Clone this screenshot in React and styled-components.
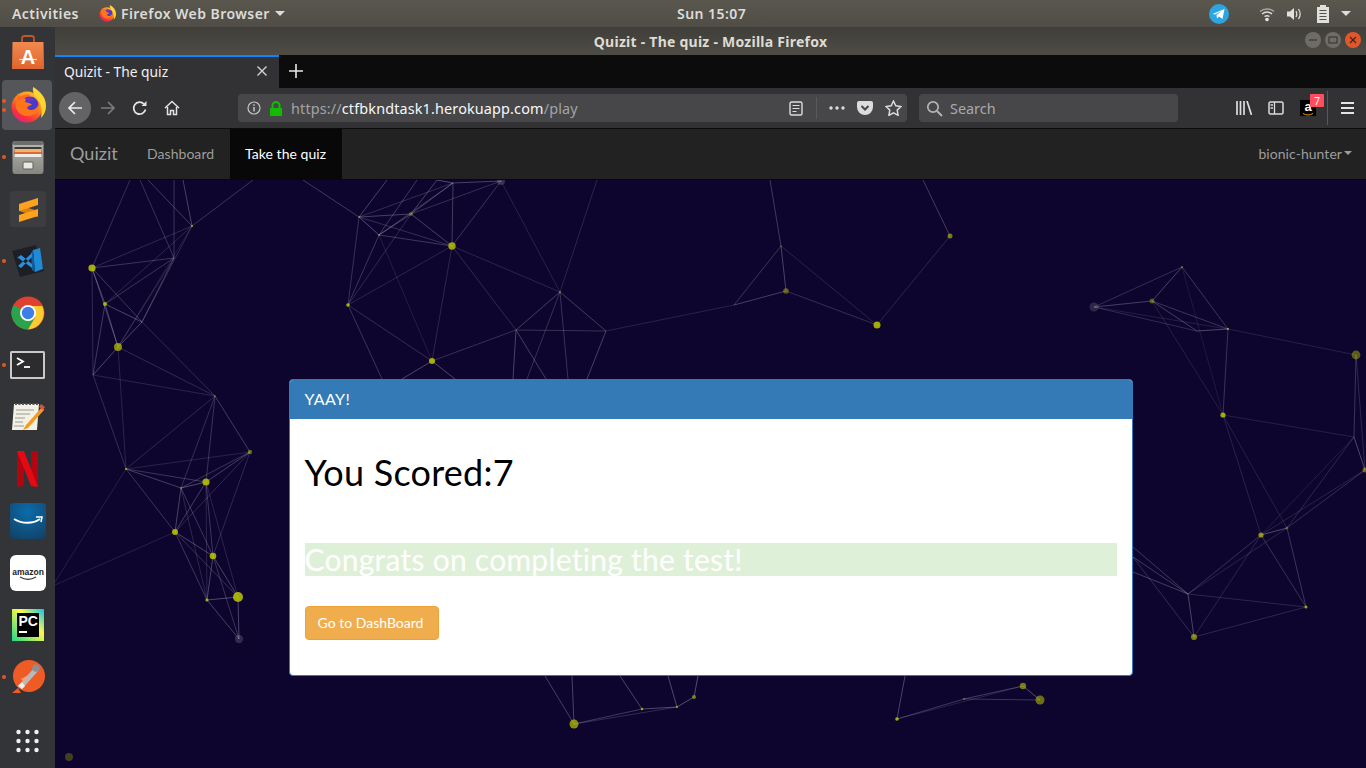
import React from 'react';
import styled, { createGlobalStyle } from 'styled-components';

const UI_FONT = '"Noto Sans", "Open Sans", sans-serif';
const PAGE_FONT = 'Lato, "Noto Sans", sans-serif';

const GlobalStyle = createGlobalStyle`
  html, body {
    margin: 0;
    padding: 0;
    height: 100%;
    overflow: hidden;
    background: #0d052e;
  }
  * { box-sizing: border-box; }
`;

const Screen = styled.div`
  width: 1366px;
  height: 768px;
  display: flex;
  flex-direction: column;
  overflow: hidden;
  font-family: ${UI_FONT};
`;

/* gnome top bar */
const TopBar = styled.div`
  height: 27px;
  flex: none;
  display: grid;
  grid-template-columns: 677px auto 1fr;
  align-items: center;
  background: linear-gradient(#5a574f, #504d46);
  color: #dcdcd8;
  font-size: 14px;
  font-weight: 600;
  letter-spacing: 0.45px;
`;

const TopLeft = styled.div`
  display: flex;
  align-items: center;
  padding-left: 12px;
`;

const AppMenu = styled.div`
  display: flex;
  align-items: center;
  gap: 5px;
  margin-left: 20px;
`;

const Clock = styled.div`
  text-align: center;
`;

const Tray = styled.div`
  display: flex;
  align-items: center;
  justify-content: flex-end;
  padding-right: 15px;
`;

const TrayItem = styled.div`
  display: flex;
  margin-left: ${p => p.$gap}px;
`;

const Caret = styled.span`
  display: inline-block;
  width: 0;
  height: 0;
  border-left: ${p => p.$size}px solid transparent;
  border-right: ${p => p.$size}px solid transparent;
  border-top: ${p => p.$size}px solid ${p => p.$color};
  margin-left: ${p => p.$gap || 0}px;
`;

const Desktop = styled.div`
  flex: 1;
  min-height: 0;
  display: flex;
`;

/* ubuntu dock */
const Dock = styled.div`
  width: 55px;
  flex: none;
  display: flex;
  flex-direction: column;
  background: #333438;
`;

const DockItem = styled.div`
  position: relative;
  height: 52px;
  flex: none;
  display: flex;
  align-items: center;
  justify-content: center;
  margin-top: ${p => p.$top || 0}px;
  &::before {
    content: '';
    display: ${p => (p.$active ? 'block' : 'none')};
    position: absolute;
    left: 2px;
    top: 1px;
    width: 50px;
    height: 50px;
    border-radius: 4px;
    background: #55565a;
  }
`;

const DockIcon = styled.div`
  position: relative;
  display: flex;
`;

const RunDots = styled.div`
  position: absolute;
  left: 2px;
  top: 0;
  bottom: 0;
  display: flex;
  flex-direction: column;
  justify-content: center;
  gap: 5px;
`;

const RunDot = styled.span`
  width: 4px;
  height: 4px;
  border-radius: 50%;
  background: #e95420;
`;

const Browser = styled.div`
  flex: 1;
  min-width: 0;
  display: flex;
  flex-direction: column;
`;

const TitleBar = styled.div`
  position: relative;
  height: 28px;
  flex: none;
  display: flex;
  align-items: center;
  justify-content: center;
  background: linear-gradient(#403e38, #4e4c45);
  color: #dedbd2;
  font-size: 14px;
  font-weight: 700;
  letter-spacing: 0.25px;
`;

const WindowButtons = styled.div`
  position: absolute;
  right: 5px;
  top: 5px;
  display: flex;
  gap: 4px;
`;

const WindowButton = styled.div`
  width: 16px;
  height: 16px;
  border-radius: 50%;
  display: flex;
  align-items: center;
  justify-content: center;
  background: ${p => p.$bg};
`;

const TabStrip = styled.div`
  height: 33px;
  flex: none;
  display: flex;
  background: #0c0c0c;
`;

const Tab = styled.div`
  width: 224px;
  display: flex;
  align-items: center;
  justify-content: space-between;
  padding: 0 11px 3px 9px;
  background: #323234;
  border-top: 2px solid #0a84ff;
  color: #f0f0f2;
  font-size: 13.8px;
`;

const NewTab = styled.div`
  width: 34px;
  padding-bottom: 2px;
  display: flex;
  align-items: center;
  justify-content: center;
`;

const Toolbar = styled.div`
  height: 41px;
  flex: none;
  display: flex;
  align-items: center;
  padding: 0 3px 0 4px;
  background: #323234;
  border-bottom: 1px solid #0c0c0c;
`;

const ToolButton = styled.div`
  position: relative;
  width: 32px;
  height: 32px;
  flex: none;
  display: flex;
  align-items: center;
  justify-content: center;
  border-radius: 50%;
  background: ${p => (p.$round ? '#636365' : 'transparent')};
  margin-left: ${p => p.$left || 0}px;
`;

const InputBox = styled.div`
  height: 28px;
  flex: none;
  width: ${p => p.$width}px;
  margin-left: ${p => p.$left}px;
  display: flex;
  align-items: center;
  border-radius: 4px;
  background: #474749;
  font-size: 14.4px;
`;

const Address = styled.div`
  flex: 1;
  margin-left: 8px;
  white-space: nowrap;
  color: #f7f7f8;
  letter-spacing: 0.15px;
`;

const Dim = styled.span`
  color: #a3a3a6;
`;

const UrlAction = styled.div`
  width: ${p => p.$width || 28}px;
  flex: none;
  display: flex;
  justify-content: center;
`;

const Separator = styled.div`
  width: 1px;
  height: ${p => p.$height}px;
  margin: 0 ${p => p.$space}px;
  background: #59595b;
`;

const SearchText = styled.span`
  color: #a9a9ac;
`;

const AmazonTile = styled.div`
  width: 16px;
  height: 16px;
  display: flex;
  flex-direction: column;
  align-items: center;
  background: #000;
  color: #fff;
  font-family: "Liberation Sans", sans-serif;
  font-weight: 700;
  font-size: 13px;
  line-height: 13px;
`;

const Badge = styled.div`
  position: absolute;
  left: 18px;
  top: 2px;
  width: 14px;
  height: 13px;
  border-radius: 1px;
  display: flex;
  align-items: center;
  justify-content: center;
  background: #ff4f5e;
  color: #fff;
  font-size: 10px;
  line-height: 1;
`;

/* site */
const Navbar = styled.nav`
  height: 51px;
  flex: none;
  display: flex;
  background: #222;
  border-bottom: 1px solid #080808;
  font-family: ${PAGE_FONT};
  font-size: 14px;
  letter-spacing: 0.05px;
  color: #9d9d9d;
`;

const Brand = styled.div`
  width: 77px;
  padding: 0 0 2px 15px;
  display: flex;
  align-items: center;
  font-size: 18px;
`;

const NavLink = styled.div`
  display: flex;
  align-items: center;
  padding: 0 15px 2px;
  background: ${p => (p.$active ? '#080808' : 'transparent')};
  color: ${p => (p.$active ? '#fff' : '#9d9d9d')};
  width: ${p => p.$width}px;
`;

const UserMenu = styled.div`
  margin-left: auto;
  display: flex;
  align-items: center;
  padding: 0 14px 2px 0;
`;

const Page = styled.main`
  position: relative;
  flex: 1;
  min-height: 0;
  display: flex;
  align-items: flex-start;
  justify-content: center;
  padding-top: 199px;
  background: #0d052e;
  overflow: hidden;
`;

const Particles = styled.svg`
  position: absolute;
  left: 0;
  top: 0;
`;

const Panel = styled.section`
  position: relative;
  width: 844px;
  height: 297px;
  background: #fff;
  border: 1px solid #337ab7;
  border-radius: 4px;
  font-family: ${PAGE_FONT};
  font-variant-ligatures: none;
  overflow: hidden;
`;

const PanelHeading = styled.div`
  height: 39px;
  padding: 0 15px 3px;
  display: flex;
  align-items: center;
  background: #337ab7;
  color: #fff;
  font-size: 16px;
  letter-spacing: 0.4px;
`;

const PanelBody = styled.div`
  padding: 33px 15px 0;
`;

const Score = styled.h1`
  margin: 0 0 51px;
  font-size: 36px;
  font-weight: 400;
  line-height: 40px;
  letter-spacing: 0.25px;
  color: #000;
`;

const Congrats = styled.h2`
  margin: 0 0 30px;
  height: 33px;
  font-size: 30px;
  font-weight: 400;
  line-height: 32px;
  letter-spacing: 0.25px;
  color: #fff;
  background: #dff0d8;
`;

const DashButton = styled.button`
  width: 134px;
  height: 34px;
  padding: 0 2px 2px 0;
  display: block;
  border: 1px solid #eea236;
  border-radius: 4px;
  background: #f0ad4e;
  color: #fff;
  font-family: ${PAGE_FONT};
  font-size: 14px;
  font-variant-ligatures: none;
`;

/* icons */
const FirefoxLogo = ({ size, id }) => (
  <svg width={size} height={size} viewBox="0 0 36 36">
    <defs>
      <linearGradient id={id} x1="0.75" y1="0.1" x2="0.25" y2="0.95">
        <stop offset="0" stopColor="#ffb52e" />
        <stop offset="0.4" stopColor="#ff7a1f" />
        <stop offset="0.8" stopColor="#f5303f" />
        <stop offset="1" stopColor="#e8207c" />
      </linearGradient>
    </defs>
    <circle cx="17" cy="20" r="15.500" fill={`url(#${id})`} />
    <path d="M7 6c1 2 2 3 3 4 3-2 7-3 10-2l-3 5-9 3z" fill="#ff6a1f" />
    <path d="M23 0c7 4 13 10 13 19 0 5-2 9-5 12 1-6 1-13-3-18-2-3-6-7-5-13z" fill="#ffd52e" />
    <circle cx="20" cy="18" r="8.500" fill="#4a3ac9" />
    <path d="M16 10c3 0 6 1 8 3l-6 2z" fill="#7b2ec0" />
    <path d="M6 15c3-3 7-4 10-3l-1 3c3 1 6 1 7 3-2 0-4 1-5 3 1 2 5 3 8 1 3-2 4-5 4-7 2 7-4 14-12 14C10 29 4 22 6 15z" fill="#ff7519" />
  </svg>
);

const SoftwareIcon = () => (
  <svg width="34" height="36" viewBox="0 0 34 36">
    <defs>
      <linearGradient id="bag" x1="0" y1="0" x2="0" y2="1">
        <stop offset="0" stopColor="#f08a4e" />
        <stop offset="1" stopColor="#e0642e" />
      </linearGradient>
    </defs>
    <path d="M11 9V3.500C11 2 12 1 13.500 1h7C22 1 23 2 23 3.500V9" fill="none" stroke="#c4552a" strokeWidth="1.800" />
    <path d="M1.500 7h31l.5 27H1z" fill="url(#bag)" />
    <text x="17" y="29" fontFamily="Liberation Sans" fontWeight="700" fontSize="20" fill="#fff" textAnchor="middle">A</text>
    <path d="M8 24.500h18" stroke="#fff" strokeWidth="1.200" opacity="0.8" />
  </svg>
);

const FilesIcon = () => (
  <svg width="32" height="34" viewBox="0 0 32 34">
    <defs>
      <linearGradient id="cab" x1="0" y1="0" x2="0" y2="1">
        <stop offset="0" stopColor="#b9b9b4" />
        <stop offset="1" stopColor="#86867f" />
      </linearGradient>
    </defs>
    <path d="M0.500 4a3 3 0 0 1 3-3h25a3 3 0 0 1 3 3v27a3 3 0 0 1-3 3h-25a3 3 0 0 1-3-3z" fill="url(#cab)" />
    <rect x="0.500" y="1" width="31" height="4" rx="2" fill="#6e6e69" />
    <rect x="2.500" y="7" width="27" height="10" fill="#3f3d3a" />
    <rect x="2.500" y="9" width="27" height="3" fill="#f4b07a" />
    <rect x="2.500" y="12" width="27" height="2" fill="#dd6b2b" />
    <rect x="2.500" y="14" width="27" height="3" fill="#ecece8" />
    <rect x="11" y="22" width="10" height="7" rx="1" fill="#e8e8e4" stroke="#5e5e5a" />
  </svg>
);

const SublimeIcon = () => (
  <svg width="36" height="36" viewBox="0 0 36 36">
    <rect width="36" height="36" rx="3" fill="#3d3d3f" />
    <path d="M9 14l19 6v6L9 20z" fill="#d9800f" />
    <path d="M9 13l19-6v7L9 20z" fill="#ffa21f" />
    <path d="M9 24l19-6v7L9 31z" fill="#ffa21f" />
  </svg>
);

const VscodeIcon = () => (
  <svg width="32" height="32" viewBox="0 0 32 32">
    <path d="M0 6l24-6 8 26-24 6z" fill="#1c2026" />
    <path d="M21 5l7-2 3 21-8 3z" fill="#1f8ad6" />
    <path d="M21 5l2 22-3-2-1-17z" fill="#0f5f9e" />
    <path d="M6 12l3-2 11 9v4L5 12zM6 21l3 2 11-11V8z" fill="#2a8fdc" />
  </svg>
);

const ChromeIcon = () => (
  <svg width="34" height="34" viewBox="0 0 34 34">
    <circle cx="17" cy="17" r="16.500" fill="#e0402f" />
    <path d="M17 17L2.700 8.700A16.500 16.500 0 0 0 17 33.500l7-12z" fill="#2ba24c" />
    <path d="M17 10h14.300a16.500 16.500 0 0 1-14.300 23.500l7-12z" fill="#fbcb30" />
    <circle cx="17" cy="17" r="8" fill="#fff" />
    <circle cx="17" cy="17" r="6.200" fill="#3f7de8" />
  </svg>
);

const TerminalIcon = () => (
  <svg width="35" height="28" viewBox="0 0 35 28">
    <rect width="35" height="28" rx="1.500" fill="#c9c9c9" />
    <rect x="2" y="2" width="31" height="24" fill="#2c2c2e" />
    <path d="M7 7l6 3.500-6 3.500" fill="none" stroke="#fff" strokeWidth="1.800" />
    <path d="M14 16h6" stroke="#fff" strokeWidth="1.800" />
  </svg>
);

const NotesIcon = () => (
  <svg width="34" height="30" viewBox="0 0 34 30">
    <path d="M3 2h25l-2 26H1z" fill="#f3f1e6" />
    <path d="M4 2h24" stroke="#555" strokeWidth="2" strokeDasharray="2 1.500" />
    <path d="M5 8h18M5 12h14M4 16h10M4 20h8M3 24h10" stroke="#9a9a94" />
    <path d="M32 4l-17 19-3 5 5-2L33 8z" fill="#f59a23" />
    <path d="M30 2l4 3-2 3-4-3z" fill="#e0503a" />
  </svg>
);

const NetflixIcon = () => (
  <svg width="21" height="36" viewBox="0 0 21 36">
    <path d="M0 0h7v35l-7 1z" fill="#b1060f" />
    <path d="M14 0h7v36l-7-1z" fill="#b1060f" />
    <path d="M0 0h7l14 36-7-1z" fill="#e50914" />
  </svg>
);

const AmazonBlueIcon = () => (
  <svg width="36" height="36" viewBox="0 0 36 36">
    <defs>
      <radialGradient id="azblue" cx="0.5" cy="0.25" r="0.9">
        <stop offset="0" stopColor="#0b6cab" />
        <stop offset="1" stopColor="#123f63" />
      </radialGradient>
    </defs>
    <rect width="36" height="36" rx="4" fill="url(#azblue)" />
    <path d="M4 16c8 5 19 5 26 0" fill="none" stroke="#fff" strokeWidth="1.800" />
    <path d="M26 14l6 0-1 5" fill="none" stroke="#fff" strokeWidth="1.500" />
  </svg>
);

const AmazonWhiteIcon = () => (
  <svg width="36" height="36" viewBox="0 0 36 36">
    <rect width="36" height="36" rx="6" fill="#fff" />
    <text x="18" y="20" fontFamily="Liberation Sans" fontWeight="700" fontSize="8.500" fill="#222" textAnchor="middle">amazon</text>
    <path d="M10 22c5 3 11 3 16 0" fill="none" stroke="#333" strokeWidth="1.100" />
  </svg>
);

const PycharmIcon = () => (
  <svg width="32" height="32" viewBox="0 0 32 32">
    <defs>
      <linearGradient id="pcbg" x1="0" y1="1" x2="1" y2="0">
        <stop offset="0" stopColor="#21d789" />
        <stop offset="0.6" stopColor="#fcf84a" />
        <stop offset="1" stopColor="#07c3f2" />
      </linearGradient>
    </defs>
    <rect width="32" height="32" fill="url(#pcbg)" />
    <rect x="5" y="4" width="22" height="24" fill="#000" />
    <text x="6.500" y="17" fontFamily="Liberation Sans" fontWeight="700" fontSize="14" fill="#fff">PC</text>
    <rect x="7" y="22" width="8" height="2" fill="#fff" />
  </svg>
);

const PostmanIcon = () => (
  <svg width="34" height="34" viewBox="0 0 34 34">
    <circle cx="18" cy="16" r="16" fill="#ef5b25" />
    <path d="M24 7L7 26l4 3 17-19z" fill="#b9b9b9" />
    <path d="M7 26l4 3 3-3-3-4z" fill="#efefef" />
    <circle cx="25" cy="8" r="3.800" fill="#8e8e8e" />
    <path d="M10 19l9-5-6 8z" fill="#f7a27e" />
    <path d="M1 33l6-5 3 5z" fill="#ef5b25" />
  </svg>
);

const GridIcon = () => (
  <svg width="24" height="24" viewBox="0 0 24 24" fill="#f2f2f2">
    {[3, 12, 21].map(y => [2.500, 11.500, 20.500].map(x => <circle key={`${x}-${y}`} cx={x} cy={y} r="2.200" />))}
  </svg>
);

const stroke = (color, width = 1.6) => ({ fill: 'none', stroke: color, strokeWidth: width });

/* background network, coordinates are screen pixels */
const NODES = {
  A: [192, 226, 1], B: [92, 268, 3.6], C: [174, 258, 0], D: [105, 304, 2], E: [142, 322, 0], F: [118, 347, 4, 0.7],
  G: [93, 375, 0], H: [215, 396, 1, 0.3], I: [250, 452, 2.2, 0.5], J: [126, 469, 1], K: [206, 482, 3.6], L: [181, 488, 1, 0.4],
  M: [175, 532, 3], N: [213, 556, 3.3], O: [238, 597, 5], P: [207, 600, 1.6], Q: [239, 639, 4.2, 0.18],
  t1: [130, 180, 0], t2: [140, 180, 0], t3: [148, 180, 0], t4: [174, 180, 0], t5: [183, 180, 0], t6: [253, 180, 0], l1: [55, 585, 0], l2: [55, 582, 0],
  a: [453, 183, 0], b: [501, 181, 4, 0.2], c: [411, 214, 2, 0.35], d: [359, 217, 1, 0.4], e: [379, 235, 0.8], f: [452, 246, 3.7, 0.8],
  g: [348, 305, 1.8], h: [432, 361, 3], i: [560, 292, 0.8], j: [516, 330, 0], k: [606, 331, 0], m: [734, 305, 0], n: [786, 291, 2.8, 0.45],
  o: [781, 246, 0.6], p: [877, 325, 3.5], q: [950, 236, 2.5, 0.6],
  u1: [303, 180, 0], u2: [387, 180, 0], u3: [417, 180, 0], u4: [437, 180, 0], u5: [770, 180, 0], u6: [923, 180, 0], u7: [597, 180, 0],
  v1: [402, 379, 0], v2: [382, 379, 0], v3: [455, 379, 0], v4: [513, 379, 0], v5: [546, 379, 0], v6: [568, 379, 0], v7: [587, 379, 0], v8: [527, 379, 0],
  r1: [1094, 307, 4.5, 0.16], r2: [1152, 301, 2.5, 0.4], r3: [1182, 267, 0.8], r4: [1197, 331, 0], r5: [1228, 329, 1], r6: [1223, 415, 2.6],
  r7: [1356, 355, 4.4, 0.45], r8: [1354, 437, 0], r9: [1365, 470, 2.5, 0.5], r10: [1261, 535, 2.6, 0.7], r11: [1287, 528, 1.4, 0.35],
  r12: [1188, 594, 0], r13: [1306, 607, 1.5, 0.8], r14: [1194, 637, 3, 0.65],
  w1: [1133, 547, 0], w2: [1133, 557, 0], w3: [1133, 572, 0],
  x1: [574, 724, 4.5, 0.7], x2: [642, 709, 1.2], x3: [677, 707, 1], x4: [694, 697, 2, 0.6], x5: [572, 676, 0], x6: [545, 676, 0], x7: [698, 676, 0], x8: [668, 676, 0], x9: [620, 676, 0],
  y1: [897, 719, 1.8], y2: [964, 699, 0.8], y3: [1040, 700, 4.5, 0.55], y4: [1023, 686, 3.2, 0.6], y5: [905, 676, 0], z: [69, 757, 4, 0.3],
};

const EDGES = `A-B A-E A-D A-F B-C B-D B-F B-E B-G C-D C-E C-F D-E D-F D-G E-F F-G E-H F-H G-H G-J F-J H-J H-K H-L H-I
I-J I-K I-L I-M I-N J-K J-L J-M L-K K-M L-M K-N L-N M-N M-P M-O N-O N-P K-P K-O L-P O-P O-Q P-Q N-Q
A-t3 A-t5 A-t6 C-t2 C-t4 B-t1 M-l1 J-l2
d-a d-c d-e d-f e-c e-f e-a e-g c-a c-f c-b a-f a-b f-b d-g g-c g-f g-h f-h f-j f-i e-h b-i h-j i-j i-k j-k k-m m-n m-o o-n n-p o-p p-q
q-u6 o-u5 d-u1 d-u2 e-u3 c-u4 a-u4 i-u7 h-v1 g-v2 h-v3 j-v4 j-v5 i-v6 k-v7 i-v8
r1-r2 r1-r3 r1-r4 r1-r5 r2-r3 r2-r4 r2-r5 r3-r5 r3-r6 r4-r5 r5-r6 r2-r6 r5-r7 r6-r8 r7-r8 r7-r9 r8-r9 r6-r10 r6-r11 r8-r10 r8-r11 r9-r10 r9-r11 r10-r11
r10-r12 r11-r12 r10-r13 r11-r13 r10-r14 r12-r13 r12-r14 r13-r14 r12-w1 r12-w2 r12-w3 r14-w2
x1-x2 x2-x3 x3-x4 x1-x5 x1-x6 x4-x7 x3-x8 x2-x9 x1-x3 y1-y2 y2-y3 y3-y4 y1-y5 y1-y4 y2-y4`
  .split(/\s+/)
  .map(pair => pair.split('-'));

const edgeOpacity = (a, b) => {
  const dist = Math.hypot(a[0] - b[0], a[1] - b[1]);
  return Math.max(0.09, 0.42 * (1 - dist / 200));
};

const Network = () => (
  <Particles width="1311" height="588" viewBox="55 180 1311 588">
    {EDGES.map(([from, to]) => {
      const a = NODES[from];
      const b = NODES[to];
      return (
        <line
          key={`${from}-${to}`}
          x1={a[0]}
          y1={a[1]}
          x2={b[0]}
          y2={b[1]}
          stroke="#c9bfdc"
          strokeWidth="1"
          strokeOpacity={edgeOpacity(a, b)}
        />
      );
    })}
    {Object.entries(NODES)
      .filter(([, n]) => n[2] > 0)
      .map(([name, n]) => (
        <circle key={name} cx={n[0]} cy={n[1]} r={n[2]} fill={n[3] < 0.25 ? '#d8d8c8' : '#bcc800'} fillOpacity={n[3] || 0.85} />
      ))}
  </Particles>
);

const DOCK = [
  { icon: <SoftwareIcon /> },
  { icon: <FirefoxLogo size={36} id="ffdock" />, dots: 2, active: true },
  { icon: <FilesIcon />, dots: 1 },
  { icon: <SublimeIcon /> },
  { icon: <VscodeIcon />, dots: 1 },
  { icon: <ChromeIcon /> },
  { icon: <TerminalIcon />, dots: 1 },
  { icon: <NotesIcon /> },
  { icon: <NetflixIcon /> },
  { icon: <AmazonBlueIcon /> },
  { icon: <AmazonWhiteIcon /> },
  { icon: <PycharmIcon /> },
  { icon: <PostmanIcon />, dots: 1 },
];

const App = () => (
  <Screen>
    <GlobalStyle />
    <TopBar>
      <TopLeft>
        Activities
        <AppMenu>
          <FirefoxLogo size={17} id="fftop" />
          Firefox Web Browser
          <Caret $size={5} $color="#dcdcd8" />
        </AppMenu>
      </TopLeft>
      <Clock>Sun 15:07</Clock>
      <Tray>
        <svg width="20" height="20" viewBox="0 0 20 20">
          <circle cx="10" cy="10" r="10" fill="#2ca5e0" />
          <path d="M3.500 10L15.500 5l-2 10-3.500-2.500-2 2-.5-3.500 5-4-6.500 3.500z" fill="#fff" />
        </svg>
        <TrayItem $gap={30}>
          <svg width="16" height="16" viewBox="0 0 16 16">
            <g {...stroke('#dcdcd8', 1.5)}>
              <path d="M1 5.500c4-3.500 10-3.500 14 0" opacity="0.6" />
              <path d="M3 8c3-2.500 7-2.500 10 0" />
              <path d="M5.500 10.500c1.500-1 3.500-1 5 0" />
            </g>
            <circle cx="8" cy="13.500" r="1.800" fill="#e8e8e4" />
          </svg>
        </TrayItem>
        <TrayItem $gap={11}>
          <svg width="16" height="16" viewBox="0 0 16 16">
            <path d="M1 5.500h3L8 2v12l-4-3.500H1z" fill="#e0e0dc" />
            <path d="M10 5c1 2 1 4 0 6M12.500 3c2 3 2 7 0 10" {...stroke('#dcdcd8', 1.3)} />
          </svg>
        </TrayItem>
        <TrayItem $gap={14}>
          <svg width="14" height="18" viewBox="0 0 14 18">
            <path d="M4 0h6v2h3v16H1V2h3z" fill="#e0e0dc" />
            <path d="M3.500 5.500h7M3.500 8.500h7M3.500 11.500h7M3.500 14.500h7" stroke="#54514a" strokeWidth="1.200" />
          </svg>
        </TrayItem>
        <Caret $size={5} $color="#dcdcd8" $gap={11} />
      </Tray>
    </TopBar>
    <Desktop>
      <Dock>
        {DOCK.map((item, idx) => (
          <DockItem key={idx} $active={item.active}>
            {item.dots && (
              <RunDots>
                {Array.from({ length: item.dots }).map((_, d) => (
                  <RunDot key={d} />
                ))}
              </RunDots>
            )}
            <DockIcon>{item.icon}</DockIcon>
          </DockItem>
        ))}
        <DockItem $top={12}>
          <GridIcon />
        </DockItem>
      </Dock>
      <Browser>
        <TitleBar>
          Quizit - The quiz - Mozilla Firefox
          <WindowButtons>
            <WindowButton $bg="#6e6c65">
              <svg width="10" height="10" viewBox="0 0 10 10">
                <path d="M1 5h8" stroke="#3b3a35" strokeWidth="1.300" />
              </svg>
            </WindowButton>
            <WindowButton $bg="#6e6c65">
              <svg width="10" height="10" viewBox="0 0 10 10">
                <rect x="1" y="2" width="8" height="6" {...stroke('#3b3a35', 1.200)} />
              </svg>
            </WindowButton>
            <WindowButton $bg="#e2562a">
              <svg width="10" height="10" viewBox="0 0 10 10">
                <path d="M2 2l6 6M8 2l-6 6" stroke="#3b2a20" strokeWidth="1.300" />
              </svg>
            </WindowButton>
          </WindowButtons>
        </TitleBar>
        <TabStrip>
          <Tab>
            Quizit - The quiz
            <svg width="12" height="12" viewBox="0 0 12 12">
              <path d="M1.500 1.500l9 9M10.500 1.500l-9 9" stroke="#d4d4d6" strokeWidth="1.400" />
            </svg>
          </Tab>
          <NewTab>
            <svg width="14" height="14" viewBox="0 0 14 14">
              <path d="M7 0v14M0 7h14" stroke="#e8e8ea" strokeWidth="1.600" />
            </svg>
          </NewTab>
        </TabStrip>
        <Toolbar>
          <ToolButton $round>
            <svg width="16" height="16" viewBox="0 0 16 16">
              <path d="M15 8H2M8 2L2 8l6 6" {...stroke('#ededef', 1.700)} />
            </svg>
          </ToolButton>
          <ToolButton $left={1}>
            <svg width="16" height="16" viewBox="0 0 16 16">
              <path d="M1 8h13M8 2l6 6-6 6" {...stroke('#7b7b7d', 1.700)} />
            </svg>
          </ToolButton>
          <ToolButton>
            <svg width="16" height="16" viewBox="0 0 16 16">
              <path d="M13.500 9.500A6 6 0 1 1 12 4" {...stroke('#e4e4e6', 1.700)} />
              <path d="M14.500 1v5h-5z" fill="#e4e4e6" />
            </svg>
          </ToolButton>
          <ToolButton>
            <svg width="16" height="16" viewBox="0 0 16 16">
              <path d="M1 8l7-6.500L15 8M3.500 7v7.500h3v-4h3v4h3V7" {...stroke('#e4e4e6', 1.500)} />
            </svg>
          </ToolButton>
          <InputBox $width={669} $left={50}>
            <UrlAction $width={31}>
              <svg width="14" height="14" viewBox="0 0 14 14">
                <circle cx="7" cy="7" r="6" {...stroke('#c4c4c6', 1.200)} />
                <path d="M7 6v4.500M7 3.200v1.500" {...stroke('#c4c4c6', 1.500)} />
              </svg>
            </UrlAction>
            <svg width="14" height="15" viewBox="0 0 14 15">
              <path d="M3.500 7V4.500a3.500 3.500 0 0 1 7 0V7" {...stroke('#12bc00', 2)} />
              <rect x="1" y="7" width="12" height="8" rx="1" fill="#12bc00" />
            </svg>
            <Address>
              <Dim>https://</Dim>ctfbkndtask1.herokuapp.com<Dim>/play</Dim>
            </Address>
            <UrlAction>
              <svg width="14" height="15" viewBox="0 0 14 15">
                <rect x="1" y="1" width="12" height="13" rx="1.500" {...stroke('#dcdcde', 1.400)} />
                <path d="M3.500 4.500h7M3.500 7.500h7M3.500 10.500h4" stroke="#dcdcde" strokeWidth="1.200" />
              </svg>
            </UrlAction>
            <Separator $height={22} $space={6} />
            <UrlAction>
              <svg width="16" height="4" viewBox="0 0 16 4" fill="#dcdcde">
                <circle cx="2" cy="2" r="1.700" />
                <circle cx="8" cy="2" r="1.700" />
                <circle cx="14" cy="2" r="1.700" />
              </svg>
            </UrlAction>
            <UrlAction>
              <svg width="16" height="14" viewBox="0 0 16 14">
                <path d="M2 0h12a2 2 0 0 1 2 2v4a8 8 0 0 1-16 0V2a2 2 0 0 1 2-2z" fill="#dcdcde" />
                <path d="M4.500 5L8 8.500 11.500 5" {...stroke('#474749', 2)} />
              </svg>
            </UrlAction>
            <UrlAction>
              <svg width="17" height="16" viewBox="0 0 17 16">
                <path d="M8.500 1l2.300 4.800 5.200.7-3.800 3.600.9 5.200-4.600-2.500-4.600 2.500.9-5.200L1 6.500l5.200-.7z" {...stroke('#dcdcde', 1.500)} />
              </svg>
            </UrlAction>
          </InputBox>
          <InputBox $width={259} $left={12}>
            <UrlAction $width={31}>
              <svg width="17" height="17" viewBox="0 0 17 17">
                <circle cx="7" cy="7" r="5.200" {...stroke('#b4b4b6', 1.700)} />
                <path d="M11 11l5 5" {...stroke('#b4b4b6', 2)} />
              </svg>
            </UrlAction>
            <SearchText>Search</SearchText>
          </InputBox>
          <ToolButton $left={50}>
            <svg width="16" height="14" viewBox="0 0 16 14">
              <path d="M1 0v14M4.500 0v14M8 0v14M11 0l4.500 14" {...stroke('#dcdcde', 1.700)} />
            </svg>
          </ToolButton>
          <ToolButton>
            <svg width="16" height="14" viewBox="0 0 16 14">
              <rect x="1" y="1" width="14" height="12" rx="1.500" {...stroke('#dcdcde', 1.500)} />
              <path d="M6.500 1v12M2.500 4h2.500M2.500 7h2.500" stroke="#dcdcde" strokeWidth="1.300" />
            </svg>
          </ToolButton>
          <ToolButton>
            <AmazonTile>
              a
              <svg width="12" height="3" viewBox="0 0 12 3">
                <path d="M1 0.500c3 2 7 2 10 0" {...stroke('#f29a1d', 1)} />
              </svg>
            </AmazonTile>
            <Badge>7</Badge>
          </ToolButton>
          <Separator $height={34} $space={3} />
          <ToolButton>
            <svg width="13" height="12" viewBox="0 0 13 12">
              <path d="M0 1h13M0 6h13M0 11h13" stroke="#e4e4e6" strokeWidth="1.800" />
            </svg>
          </ToolButton>
        </Toolbar>
        <Navbar>
          <Brand>Quizit</Brand>
          <NavLink $width={98}>Dashboard</NavLink>
          <NavLink $active $width={112}>Take the quiz</NavLink>
          <UserMenu>
            bionic-hunter
            <Caret $size={4.500} $color="#9d9d9d" $gap={2} />
          </UserMenu>
        </Navbar>
        <Page>
          <Network />
          <Panel>
            <PanelHeading>YAAY!</PanelHeading>
            <PanelBody>
              <Score>You Scored:7</Score>
              <Congrats>Congrats on completing the test!</Congrats>
              <DashButton>Go to DashBoard</DashButton>
            </PanelBody>
          </Panel>
        </Page>
      </Browser>
    </Desktop>
  </Screen>
);

export default App;
